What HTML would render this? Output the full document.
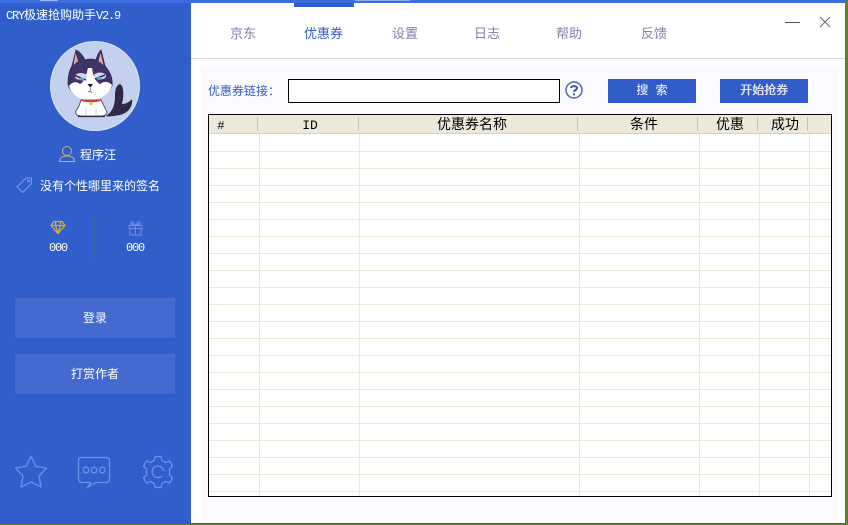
<!DOCTYPE html>
<html><head><meta charset="utf-8"><style>
html,body{margin:0;padding:0;width:848px;height:525px;overflow:hidden;background:#5f7f2a}
*{box-sizing:border-box}
.t{position:absolute;white-space:nowrap;font-family:"Liberation Mono","WenQuanYi Zen Hei","Noto Sans CJK SC",monospace;line-height:16px;height:16px}
.b{position:absolute}
.l{letter-spacing:-1.200px}
</style></head><body>
<div class="b" style="left:0;top:0;width:846px;height:524px;background:#fff"></div>
<div class="b" style="left:845px;top:0;width:1px;height:524px;background:#3a6ee0"></div>
<div class="b" style="left:0;top:523px;width:846px;height:1px;background:#3560c8"></div>
<div class="b" style="left:0;top:0;width:191px;height:524px;background:#305ecb"></div>
<div class="b" style="left:0;top:0;width:846px;height:3px;background:#3a6ee0"></div>
<div class="b" style="left:40px;top:0;width:18px;height:1px;background:#9db8f0"></div>
<div class="b" style="left:355px;top:0;width:55px;height:1px;background:#8fabee"></div>
<div class="b" style="left:294px;top:3px;width:60px;height:4px;background:#315dcb"></div>

<div class="t" style="left:6px;top:8px;color:#fff;font-size:12px;width:120px"><span class="l">CRY</span>极速抢购助手<span class="l">V2.9</span></div>

<svg class="b" style="left:49px;top:40px" width="92" height="92" viewBox="49 40 92 92">
<circle cx="95" cy="86" r="44.500" fill="#c3d1ee" stroke="#dbe4f7" stroke-width="1"/>
<path d="M106 116C112 112 115 106 115 96C115 90 116 85 120 84C124 86 124 96 122 104C125 104 130 102 132 99C133 107 128 113 120 115C114 116 108 117 106 116Z" fill="#2e2a44"/>
<path d="M72 66L76 50C80 52 83 56 85 60Q91 58 96 60C97 56 99 52 101 50L105 66C110 72 113 78 112 86C108 94 100 99 90 99C80 99 70 94 68 84C68 76 69 71 72 66Z" fill="#3f3468" stroke="#2d2650" stroke-width=".8"/>
<path d="M75.500 53L78 61L73.500 65ZM100.500 53L98.500 61L103.500 65Z" fill="#eda5a0"/>
<path d="M69 86C72 82 76 81 80 84C84 82 86 76 88 68L92 68C93 76 96 82 100 84C104 81 108 81 112 85C110 94 100 100 90 100C80 100 71 95 69 86Z" fill="#fff"/>
<ellipse cx="81" cy="76.500" rx="6" ry="3.500" fill="#d9d6e6"/><ellipse cx="100" cy="76" rx="6" ry="3.500" fill="#d9d6e6"/>
<path d="M75 75.500L86 80M95 79L105 75" stroke="#1f1a3c" stroke-width="1.400"/>
<ellipse cx="81.500" cy="79" rx="3" ry="1.500" fill="#5aa6dc"/><ellipse cx="99.500" cy="78.500" rx="3" ry="1.500" fill="#5aa6dc"/>
<path d="M87.500 84H93L90.200 87.500Z" fill="#1a1626"/><path d="M90.200 87.500V90.500M88 92L90.200 91L92 93" stroke="#554" stroke-width=".7" fill="none"/>
<path d="M81 100H101L104 106L107 112C107 115 104 116 101 116H82C78 116 75 115 76 111L79 106Z" fill="#fff" stroke="#3a3358" stroke-width=".8"/>
<path d="M81 100Q91 103 101 100" stroke="#d43a30" stroke-width="1.800" fill="none"/>
<circle cx="91" cy="103.500" r="1.700" fill="#ebc23e"/>
<path d="M86 108V116M96 108V116" stroke="#c8c6d8" stroke-width=".7"/>
<path d="M78 116.500H105" stroke="#2e2a44" stroke-width="1.300"/>
</svg>

<svg class="b" style="left:58px;top:145px" width="18" height="18" viewBox="0 0 18 18" fill="none" stroke="#c8b078" stroke-width="1"><circle cx="9" cy="6" r="4.500"/><path d="M1.500 16.500C1.500 12.500 5 11 9 11C13 11 16.500 12.500 16.500 16.500Z"/></svg>
<div class="t" style="left:80px;top:148px;color:#fff;font-size:12px">程序汪</div>
<svg class="b" style="left:15px;top:176px" width="18" height="18" viewBox="0 0 18 18" fill="none" stroke="#7b9ee8" stroke-width="1"><path d="M2 11L11 2L16.500 2L16.500 7.500L7.500 16.500Z"/><circle cx="13.500" cy="5" r="1"/></svg>
<div class="t" style="left:40px;top:179px;color:#fff;font-size:12px">没有个性哪里来的签名</div>

<svg class="b" style="left:50px;top:220px" width="16" height="15" viewBox="0 0 16 15" fill="none" stroke="#d4a93a" stroke-width="1.300"><path d="M4 1.500H12L15 5.500L8 13.500L1 5.500ZM1 5.500H15M5.500 5.500L8 13M10.500 5.500L8 13M5.500 1.500L5.500 5.500M10.500 1.500V5.500"/></svg>
<svg class="b" style="left:128px;top:220px" width="15" height="16" viewBox="0 0 15 16" fill="none" stroke="#7c88da" stroke-width="1"><path d="M1 5.500H14V8.500H1ZM2 8.500V15H13V8.500M7.500 5.500V15M7.500 5.500L4 1.500L3 4L7.500 5.500L11 1.500L12 4Z"/></svg>
<div class="b" style="left:94px;top:217px;width:1px;height:40px;background:#2b6d9a"></div>
<div class="t l" style="left:49px;top:240px;color:#fff;font-size:12px">000</div>
<div class="t l" style="left:126px;top:240px;color:#fff;font-size:12px">000</div>

<div class="b" style="left:15px;top:298px;width:160px;height:40px;background:#4469cf"></div>
<div class="b" style="left:15px;top:354px;width:160px;height:40px;background:#4469cf"></div>
<div class="t" style="left:15px;top:311px;width:160px;text-align:center;color:#fff;font-size:12px">登录</div>
<div class="t" style="left:15px;top:367px;width:160px;text-align:center;color:#fff;font-size:12px">打赏作者</div>

<svg class="b" style="left:14px;top:455px" width="162" height="35" viewBox="14 455 162 35" fill="none" stroke="#6a90e8" stroke-width="1.300" stroke-linejoin="round">
<path d="M31 456.500L36 466.500L46.500 468L39 476L41 487L31 482L21 487L23 476L15.500 468L26 466.500Z"/>
<path d="M81 457.500H106C108 457.500 109.500 459 109.500 461V479C109.500 481 108 482.500 106 482.500H96L87.500 487.500L91 482.500H82C80 482.500 78.500 481 78.500 479V460.500C78.500 458.500 79.500 457.500 81 457.500Z"/>
<circle cx="86" cy="470" r="2.800"/><circle cx="94" cy="470" r="2.800"/><circle cx="102.500" cy="470" r="2.800"/>
<path d="M155 456.500H161L162 460.500L165.500 462.500L169.500 461L172.500 466L169.500 469V475L172.500 478L169.500 483L165.500 481.500L162 483.500L161 487.500H155L154 483.500L150.500 481.500L146.500 483L143.500 478L146.500 475V469L143.500 466L146.500 461L150.500 462.500L154 460.500Z"/>
<path d="M162 476A5.800 5.800 0 1 1 163.700 471"/>
</svg>

<div class="t" style="left:230px;top:27px;color:#8080a8;font-size:13px">京东</div>
<div class="t" style="left:304px;top:27px;color:#315dcb;font-size:13px">优惠券</div>
<div class="t" style="left:392px;top:27px;color:#8080a8;font-size:13px">设置</div>
<div class="t" style="left:474px;top:27px;color:#8080a8;font-size:13px">日志</div>
<div class="t" style="left:556px;top:27px;color:#8080a8;font-size:13px">帮助</div>
<div class="t" style="left:641px;top:27px;color:#8080a8;font-size:13px">反馈</div>
<div class="b" style="left:785px;top:22px;width:15px;height:1px;background:#555"></div>
<svg class="b" style="left:819px;top:16px" width="12" height="12" viewBox="0 0 12 12" stroke="#666" stroke-width="1"><path d="M1 1L11 11M11 1L1 11"/></svg>
<div class="b" style="left:191px;top:58px;width:654px;height:1px;background:#d4d4d4"></div>
<div class="b" style="left:201px;top:67px;width:638px;height:456px;background:#fbfbff"></div>

<div class="t" style="left:208px;top:83px;color:#315dcb;font-size:12px;font-family:'WenQuanYi Zen Hei','Noto Sans CJK SC',sans-serif">优惠券链接：</div>
<div class="b" style="left:288px;top:79px;width:272px;height:24px;background:#fff;border:1px solid #000"></div>
<svg class="b" style="left:565px;top:81px" width="18" height="18" viewBox="0 0 18 18"><circle cx="9" cy="9" r="8" fill="#fff" stroke="#4a68b4" stroke-width="1.500"/><path d="M6 7C6 4.500 12 4.500 12 7C12 9 9 9 9 11" fill="none" stroke="#3b5aa8" stroke-width="2"/><rect x="8" y="12.300" width="2" height="2" fill="#3b5aa8"/></svg>
<div class="b" style="left:608px;top:79px;width:88px;height:24px;background:#315dcb"></div>
<div class="b" style="left:720px;top:79px;width:88px;height:24px;background:#315dcb"></div>
<div class="t" style="left:608px;top:83px;width:88px;text-align:center;color:#fff;font-size:12px">搜 索</div>
<div class="t" style="left:720px;top:83px;width:88px;text-align:center;color:#e4e8f4;font-size:12px;text-shadow:.5px 0 #e4e8f4">开始抢券</div>

<svg class="b" style="left:208px;top:114px" width="624" height="383" viewBox="208 114 624 383" shape-rendering="crispEdges">
<rect x="208" y="114" width="624" height="383" fill="#fff"/>
<g fill="#ece9d8">
<rect x="209" y="151" width="622" height="1"/><rect x="209" y="168" width="622" height="1"/><rect x="209" y="185" width="622" height="1"/><rect x="209" y="202" width="622" height="1"/><rect x="209" y="219" width="622" height="1"/><rect x="209" y="236" width="622" height="1"/><rect x="209" y="253" width="622" height="1"/><rect x="209" y="270" width="622" height="1"/><rect x="209" y="287" width="622" height="1"/><rect x="209" y="304" width="622" height="1"/><rect x="209" y="321" width="622" height="1"/><rect x="209" y="338" width="622" height="1"/><rect x="209" y="355" width="622" height="1"/><rect x="209" y="372" width="622" height="1"/><rect x="209" y="389" width="622" height="1"/><rect x="209" y="406" width="622" height="1"/><rect x="209" y="423" width="622" height="1"/><rect x="209" y="440" width="622" height="1"/><rect x="209" y="457" width="622" height="1"/><rect x="209" y="474" width="622" height="1"/><rect x="209" y="491" width="622" height="1"/>
<rect x="259" y="134" width="1" height="362"/><rect x="359" y="134" width="1" height="362"/><rect x="579" y="134" width="1" height="362"/><rect x="699" y="134" width="1" height="362"/><rect x="759" y="134" width="1" height="362"/><rect x="809" y="134" width="1" height="362"/>
<rect x="209" y="115" width="622" height="18"/>
</g>
<rect x="209" y="133" width="622" height="1" fill="#d6d2c2"/>
<g fill="#c5c2b2"><rect x="257" y="117" width="1" height="14"/><rect x="358" y="117" width="1" height="14"/><rect x="577" y="117" width="1" height="14"/><rect x="697" y="117" width="1" height="14"/><rect x="757" y="117" width="1" height="14"/><rect x="807" y="117" width="1" height="14"/></g>
<rect x="208.500" y="114.500" width="623" height="382" fill="none" stroke="#000"/>
</svg>
<div class="t" style="left:209px;top:118px;width:24px;text-align:center;color:#000;font-size:12px">#</div>
<div class="t" style="left:258px;top:118px;width:104px;text-align:center;color:#000;font-size:13px">ID</div>
<div class="t" style="left:437px;top:118px;color:#000;font-size:14px">优惠券名称</div>
<div class="t" style="left:630px;top:118px;color:#000;font-size:14px">条件</div>
<div class="t" style="left:716px;top:118px;color:#000;font-size:14px">优惠</div>
<div class="t" style="left:771px;top:118px;color:#000;font-size:14px">成功</div>
</body></html>
